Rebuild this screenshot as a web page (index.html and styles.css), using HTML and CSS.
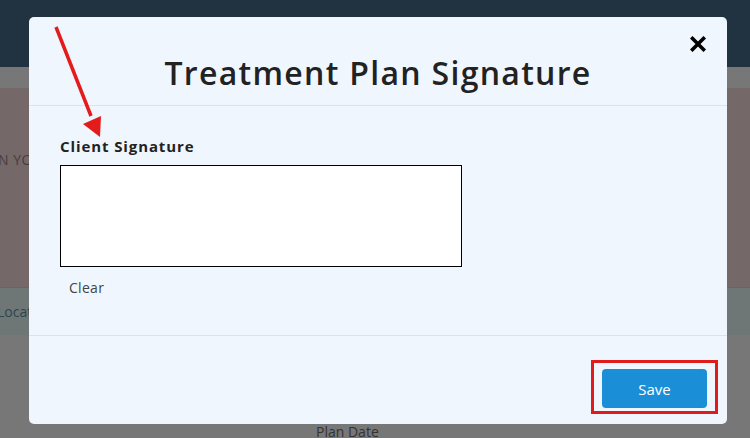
FILE: index.html
```html
<!DOCTYPE html>
<html>
<head>
<meta charset="utf-8">
<link rel="stylesheet" href="styles.css">
</head>
<body>
<div class="page">
  <div class="topbar"></div>
  <div class="gap"></div>
  <div class="alert"><span class="alert-text">N YOUR PLAN</span></div>
  <div class="locbar"><span class="loc-text">Location</span></div>
  <div class="rest"><span class="plan-date">Plan Date</span></div>
</div>

<div class="modal">
  <div class="modal-header">
    <h1 class="modal-title">Treatment Plan Signature</h1>
    <button class="close" aria-label="Close">
      <svg width="16" height="16" viewBox="0 0 16 16"><path d="M2.5 2.5 L13.5 13.5 M13.5 2.5 L2.5 13.5" stroke="#000" stroke-width="3.6" stroke-linecap="square"/></svg>
    </button>
  </div>
  <div class="modal-body">
    <div class="label">Client Signature</div>
    <div class="sig-box"></div>
    <div class="clear">Clear</div>
  </div>
  <div class="modal-footer">
    <div class="highlight"><button class="save">Save</button></div>
  </div>
</div>

<svg class="arrow" width="120" height="150" viewBox="0 0 120 150">
  <line x1="56" y1="27" x2="91" y2="116" stroke="#e41b1b" stroke-width="3.5"/>
  <polygon points="100,137 83,124 101,116" fill="#e41b1b"/>
</svg>
</body>
</html>
```

FILE: styles.css
```css
* { box-sizing: border-box; }
html, body { margin: 0; padding: 0; }
body {
  width: 750px;
  height: 438px;
  overflow: hidden;
  background: #777777;
  font-family: "Open Sans", "DejaVu Sans", sans-serif;
  position: relative;
}
.page { display: flex; flex-direction: column; }
.topbar { height: 67px; background: #213340; }
.gap { height: 21px; background: #777777; }
.alert {
  height: 200px;
  background: #746868;
  border-bottom: 1px solid #7d5b5b;
  padding-top: 60px;
  white-space: nowrap;
  overflow: hidden;
}
.alert-text { color: #4a3c3d; font-size: 14px; letter-spacing: 0.5px; margin-left: -2px; }
.locbar {
  height: 47px;
  background: #6e7676;
  display: flex;
  align-items: center;
  white-space: nowrap;
  overflow: hidden;
}
.loc-text { color: #2c4651; font-size: 14px; margin-left: -3px; }
.rest { height: 103px; position: relative; }
.plan-date {
  display: block;
  margin-left: 316px;
  margin-top: 87px;
  color: #333;
  font-size: 14px;
}

.modal {
  position: absolute;
  left: 29px;
  top: 17px;
  width: 698px;
  height: 407px;
  background: #eff6fe;
  border-radius: 5px;
  display: flex;
  flex-direction: column;
}
.modal-header {
  height: 89px;
  border-bottom: 1px solid #dce3ea;
  display: flex;
  align-items: center;
  justify-content: center;
  position: relative;
}
.modal-title {
  margin: 22px 0 0 0;
  font-size: 32px;
  font-weight: 600;
  color: #222;
  letter-spacing: 1.3px;
}
.close {
  position: absolute;
  right: 20px;
  top: 19px;
  border: 0;
  background: none;
  padding: 0;
  width: 18px;
  height: 18px;
}
.modal-body {
  height: 230px;
  border-bottom: 1px solid #dce3ea;
  padding: 30px 0 0 31px;
}
.label {
  font-size: 15px;
  font-weight: 700;
  color: #222;
  line-height: 20px;
  letter-spacing: 0.9px;
}
.sig-box {
  margin-top: 9px;
  width: 402px;
  height: 102px;
  background: #fff;
  border: 1px solid #000;
}
.clear {
  margin: 12px 0 0 9px;
  font-size: 14px;
  color: #444;
  line-height: 18px;
  letter-spacing: 0.3px;
}
.modal-footer {
  flex: 1;
  display: flex;
  justify-content: flex-end;
  align-items: flex-start;
  padding: 24px 9px 0 0;
}
.highlight {
  border: 3px solid #e01b1b;
  padding: 6px 8px 3px 8px;
}
.save {
  width: 105px;
  height: 39px;
  background: #1a8fd8;
  color: #fff;
  border: 0;
  border-radius: 4px;
  font-family: "Open Sans", "DejaVu Sans", sans-serif;
  font-size: 15px;
  display: block;
}
.arrow {
  position: absolute;
  left: 0;
  top: 0;
}
```
